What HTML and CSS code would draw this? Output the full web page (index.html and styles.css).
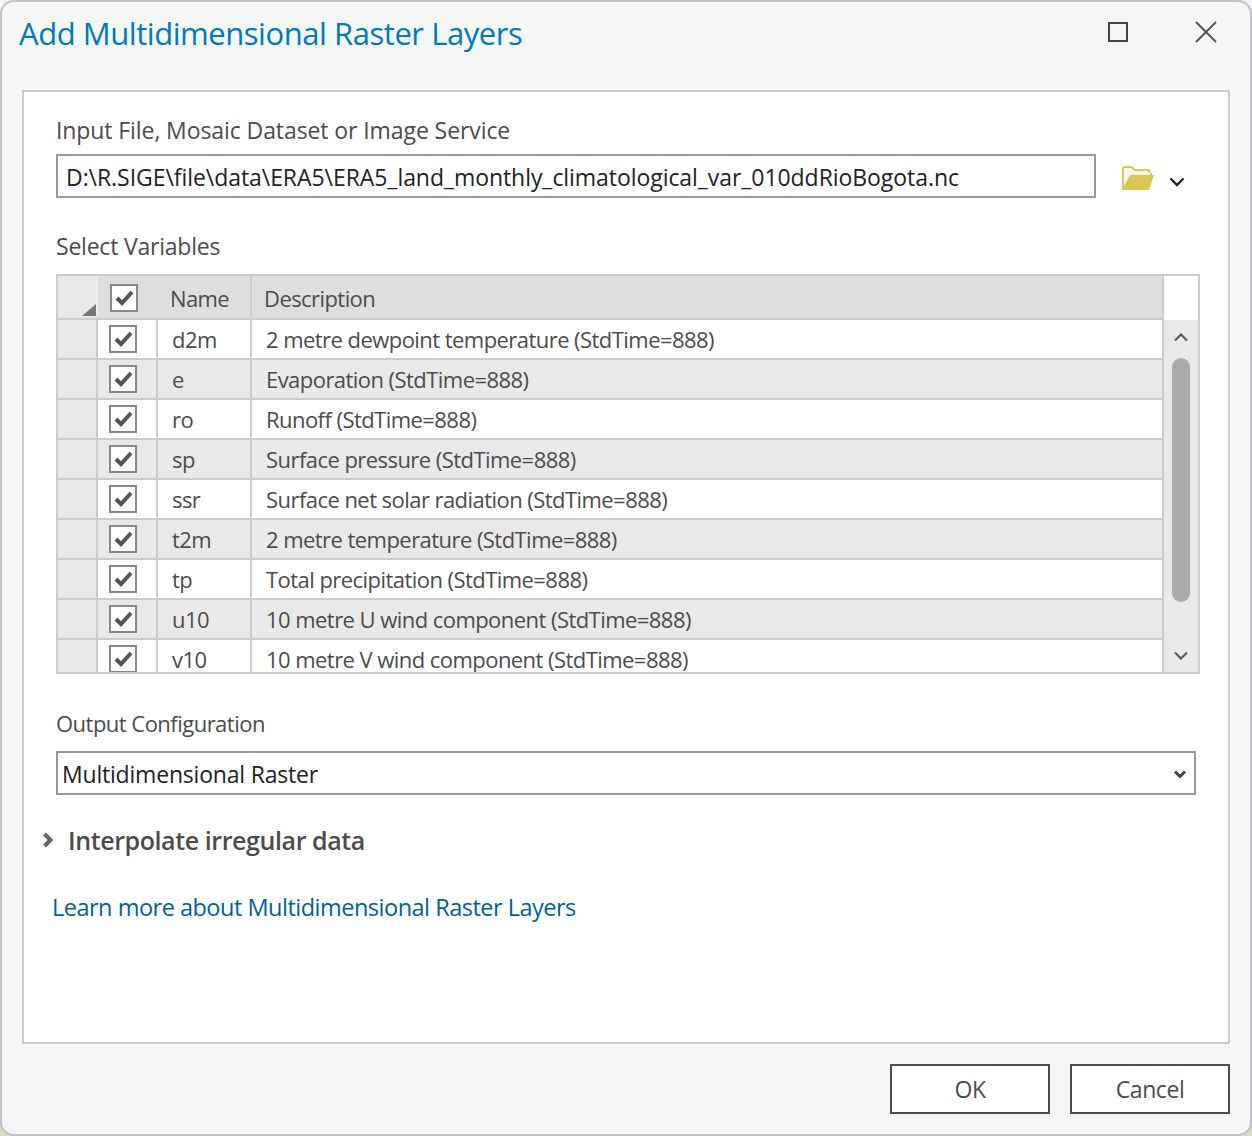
FILE: index.html
```html
<!DOCTYPE html>
<html lang="en">
<head>
<meta charset="utf-8">
<title>Add Multidimensional Raster Layers</title>
<link rel="stylesheet" href="styles.css">
</head>
<body>
<div class="dialog">
  <header class="titlebar">
    <h1 class="title">Add Multidimensional Raster Layers</h1>
    <div class="window-buttons">
      <svg class="win-max" width="20" height="20" viewBox="0 0 20 20"><rect x="1" y="1" width="18" height="18" fill="none" stroke="#444" stroke-width="2"/></svg>
      <svg class="win-close" width="24" height="24" viewBox="0 0 24 24"><path d="M2 2L22 22M22 2L2 22" fill="none" stroke="#555" stroke-width="2"/></svg>
    </div>
  </header>
  <main class="panel">
    <div class="label label-input">Input File, Mosaic Dataset or Image Service</div>
    <div class="input-row">
      <div class="input">D:\R.SIGE\file\data\ERA5\ERA5_land_monthly_climatological_var_010ddRioBogota.nc</div>
      <svg class="folder" width="34" height="26" viewBox="0 0 34 26"><path d="M1 25V3.500Q1 1 3.500 1H11L14 4H28Q29 4 29 5V10H31V8H27V6H13L10 3H3V25Z" fill="#dbc853"/><path d="M3 3H10L13 6H27V10H10L3 21Z" fill="#f5f5ee"/><path d="M9 10H33L28 25H1Z" fill="#dbc853"/></svg>
      <svg class="drop" width="16" height="10" viewBox="0 0 16 10"><path d="M1.500 1.500L8 8L14.500 1.500" fill="none" stroke="#222" stroke-width="2.400"/></svg>
    </div>
    <div class="label label-vars">Select Variables</div>
    <div class="grid">
      <div class="grid-main">
        <div class="grid-head">
          <div class="corner"><span class="corner-tri"></span></div>
          <div class="head-check"><span class="check"><svg width="24" height="24" viewBox="0 0 24 24"><path d="M5 12L10 17L20 6" fill="none" stroke="#555" stroke-width="4"/></svg></span></div>
          <div class="head-name">Name</div>
          <div class="head-desc">Description</div>
        </div>
        <div class="grid-rows">
          <div class="row"><div class="rowhead"></div><div class="cell-check"><span class="check"><svg width="24" height="24" viewBox="0 0 24 24"><path d="M5 12L10 17L20 6" fill="none" stroke="#555" stroke-width="4"/></svg></span></div><div class="cell-name">d2m</div><div class="cell-desc">2 metre dewpoint temperature (StdTime=888)</div></div>
          <div class="row alt"><div class="rowhead"></div><div class="cell-check"><span class="check"><svg width="24" height="24" viewBox="0 0 24 24"><path d="M5 12L10 17L20 6" fill="none" stroke="#555" stroke-width="4"/></svg></span></div><div class="cell-name">e</div><div class="cell-desc">Evaporation (StdTime=888)</div></div>
          <div class="row"><div class="rowhead"></div><div class="cell-check"><span class="check"><svg width="24" height="24" viewBox="0 0 24 24"><path d="M5 12L10 17L20 6" fill="none" stroke="#555" stroke-width="4"/></svg></span></div><div class="cell-name">ro</div><div class="cell-desc">Runoff (StdTime=888)</div></div>
          <div class="row alt"><div class="rowhead"></div><div class="cell-check"><span class="check"><svg width="24" height="24" viewBox="0 0 24 24"><path d="M5 12L10 17L20 6" fill="none" stroke="#555" stroke-width="4"/></svg></span></div><div class="cell-name">sp</div><div class="cell-desc">Surface pressure (StdTime=888)</div></div>
          <div class="row"><div class="rowhead"></div><div class="cell-check"><span class="check"><svg width="24" height="24" viewBox="0 0 24 24"><path d="M5 12L10 17L20 6" fill="none" stroke="#555" stroke-width="4"/></svg></span></div><div class="cell-name">ssr</div><div class="cell-desc">Surface net solar radiation (StdTime=888)</div></div>
          <div class="row alt"><div class="rowhead"></div><div class="cell-check"><span class="check"><svg width="24" height="24" viewBox="0 0 24 24"><path d="M5 12L10 17L20 6" fill="none" stroke="#555" stroke-width="4"/></svg></span></div><div class="cell-name">t2m</div><div class="cell-desc">2 metre temperature (StdTime=888)</div></div>
          <div class="row"><div class="rowhead"></div><div class="cell-check"><span class="check"><svg width="24" height="24" viewBox="0 0 24 24"><path d="M5 12L10 17L20 6" fill="none" stroke="#555" stroke-width="4"/></svg></span></div><div class="cell-name">tp</div><div class="cell-desc">Total precipitation (StdTime=888)</div></div>
          <div class="row alt"><div class="rowhead"></div><div class="cell-check"><span class="check"><svg width="24" height="24" viewBox="0 0 24 24"><path d="M5 12L10 17L20 6" fill="none" stroke="#555" stroke-width="4"/></svg></span></div><div class="cell-name">u10</div><div class="cell-desc">10 metre U wind component (StdTime=888)</div></div>
          <div class="row"><div class="rowhead"></div><div class="cell-check"><span class="check"><svg width="24" height="24" viewBox="0 0 24 24"><path d="M5 12L10 17L20 6" fill="none" stroke="#555" stroke-width="4"/></svg></span></div><div class="cell-name">v10</div><div class="cell-desc">10 metre V wind component (StdTime=888)</div></div>
        </div>
      </div>
      <div class="scroll-col">
        <div class="scroll-blank"></div>
        <div class="scrollbar">
          <svg class="arrow-up" width="14" height="9" viewBox="0 0 14 9"><path d="M1 7.500L7 1.500L13 7.500" fill="none" stroke="#555" stroke-width="2"/></svg>
          <div class="thumb"></div>
          <svg class="arrow-down" width="14" height="9" viewBox="0 0 14 9"><path d="M1 1.500L7 7.500L13 1.500" fill="none" stroke="#555" stroke-width="2"/></svg>
        </div>
      </div>
    </div>
    <div class="label label-output">Output Configuration</div>
    <div class="select">
      <span class="select-text">Multidimensional Raster</span>
      <svg width="12" height="8" viewBox="0 0 12 8"><path d="M1 1.500L6 6.500L11 1.500" fill="none" stroke="#444" stroke-width="3"/></svg>
    </div>
    <div class="expander">
      <svg width="12" height="18" viewBox="0 0 12 18"><path d="M2.500 3L8.500 9L2.500 15" fill="none" stroke="#666" stroke-width="4"/></svg>
      <span class="expander-text">Interpolate irregular data</span>
    </div>
    <a class="link" href="#">Learn more about Multidimensional Raster Layers</a>
  </main>
  <footer class="footer">
    <button class="btn">OK</button>
    <button class="btn">Cancel</button>
  </footer>
</div>
</body>
</html>
```
FILE: styles.css
```css
* { box-sizing: border-box; }
html, body { margin: 0; height: 100%; }
body {
  background: linear-gradient(#f4f4f4, #f4f4f4 85%, #d9d9c4);
  font-family: "Open Sans", "Noto Sans", sans-serif;
  font-size: 22px;
  color: #4c4c4c;
  overflow: hidden;
}
.dialog {
  width: 1252px;
  height: 1136px;
  background: #f5f7f7;
  border: 2px solid #c2c3c8;
  border-radius: 14px;
  display: flex;
  flex-direction: column;
}
.titlebar {
  height: 88px;
  flex: none;
  display: flex;
  justify-content: space-between;
  padding: 9px 32px 0 17px;
}
.title {
  margin: 0;
  font-size: 31px;
  line-height: 44px;
  font-weight: 400;
  color: #0079c1;
  letter-spacing: -0.45px;
}
.window-buttons { display: flex; align-items: flex-start; gap: 66px; padding-top: 11px; }
.win-close { margin-top: -2px; }
.panel {
  flex: none;
  height: 954px;
  margin: 0 20px;
  background: #fff;
  border: 2px solid #ccc;
  padding: 0 30px 0 32px;
  display: flex;
  flex-direction: column;
}
.label { line-height: 30px; }
.label-input { margin-top: 23px; font-size: 23px; letter-spacing: -0.09px; }
.input-row { display: flex; align-items: center; margin-top: 9px; height: 44px; }
.input {
  width: 1040px;
  height: 44px;
  border: 2px solid #999;
  background: #fff;
  padding-left: 8px;
  font-size: 23px;
  line-height: 42px;
  color: #222;
  white-space: nowrap;
  letter-spacing: -0.06px;
}
.folder { margin: 4px 0 0 25px; }
.drop { margin: 12px 0 0 14px; }
.label-vars { margin-top: 33px; font-size: 23px; letter-spacing: -0.22px; }
.grid {
  margin-top: 13px;
  width: 1144px;
  height: 400px;
  border: 2px solid #ccc;
  display: flex;
}
.grid-main { width: 1106px; flex: none; height: 396px; overflow: hidden; }
.grid-head {
  display: grid;
  grid-template-columns: 40px 60px 94px 912px;
  grid-template-rows: 42px;
  height: 44px;
  border-bottom: 2px solid #ccc;
  background: #dedede;
}
.corner { background: #e9e9e9; position: relative; }
.corner-tri {
  position: absolute;
  right: 2px;
  bottom: 2px;
  border-style: solid;
  border-width: 0 0 12px 14px;
  border-color: transparent transparent #777 transparent;
}
.head-check { padding: 8px 0 0 12px; }
.head-name { padding-left: 12px; line-height: 44px; border-right: 2px solid #ccc; letter-spacing: -0.62px; }
.head-desc { padding-left: 12px; line-height: 44px; border-right: 2px solid #ccc; letter-spacing: -0.57px; }
.check {
  display: flex;
  align-items: center;
  justify-content: center;
  width: 28px;
  height: 28px;
  border: 2px solid #888;
  background: #fff;
}
.row {
  display: grid;
  grid-template-columns: 40px 60px 94px 912px;
  grid-template-rows: 38px;
  height: 40px;
  border-bottom: 2px solid #ccc;
  background: #fff;
}
.row.alt { background: #e9e9e9; }
.rowhead { background: #e9e9e9; border-right: 2px solid #ccc; }
.cell-check { border-right: 2px solid #ccc; padding: 5px 0 0 11px; }
.cell-name { padding-left: 14px; line-height: 38px; border-right: 2px solid #ccc; letter-spacing: -0.57px; }
.cell-desc { padding-left: 14px; line-height: 38px; border-right: 2px solid #ccc; letter-spacing: -0.55px; white-space: nowrap; }
.scroll-col { width: 34px; flex: none; display: flex; flex-direction: column; }
.scroll-blank { height: 44px; flex: none; background: #fff; }
.scrollbar {
  flex: 1;
  background: #e9e9e9;
  display: flex;
  flex-direction: column;
  align-items: center;
}
.arrow-up { margin-top: 13px; }
.thumb { width: 18px; height: 244px; margin-top: 16px; background: #aaa; border-radius: 9px; }
.arrow-down { margin-top: 49px; }
.label-output { margin-top: 34px; letter-spacing: -0.52px; }
.select {
  width: 1140px;
  height: 44px;
  margin-top: 13px;
  border: 2px solid #999;
  display: flex;
  align-items: center;
  justify-content: space-between;
  padding: 2px 8px 0 4px;
}
.select-text { color: #222; font-size: 23px; letter-spacing: -0.2px; }
.expander { display: flex; align-items: center; height: 40px; margin: 25px 0 0 -14px; gap: 14px; }
.expander-text { font-size: 25px; font-weight: 600; letter-spacing: -0.41px; }
.link {
  margin: 31px 0 0 -4px;
  font-size: 23.500px;
  line-height: 32px;
  color: #00619b;
  text-decoration: none;
  letter-spacing: -0.5px;
}
.footer {
  flex: 1;
  display: flex;
  justify-content: flex-end;
  gap: 20px;
  padding: 20px 20px 0 0;
}
.btn {
  width: 160px;
  height: 50px;
  border: 2px solid #4c4c4c;
  background: #fff;
  font: inherit;
  font-size: 23px;
  color: #4c4c4c;
  letter-spacing: -0.42px;
  padding: 0;
}
```
